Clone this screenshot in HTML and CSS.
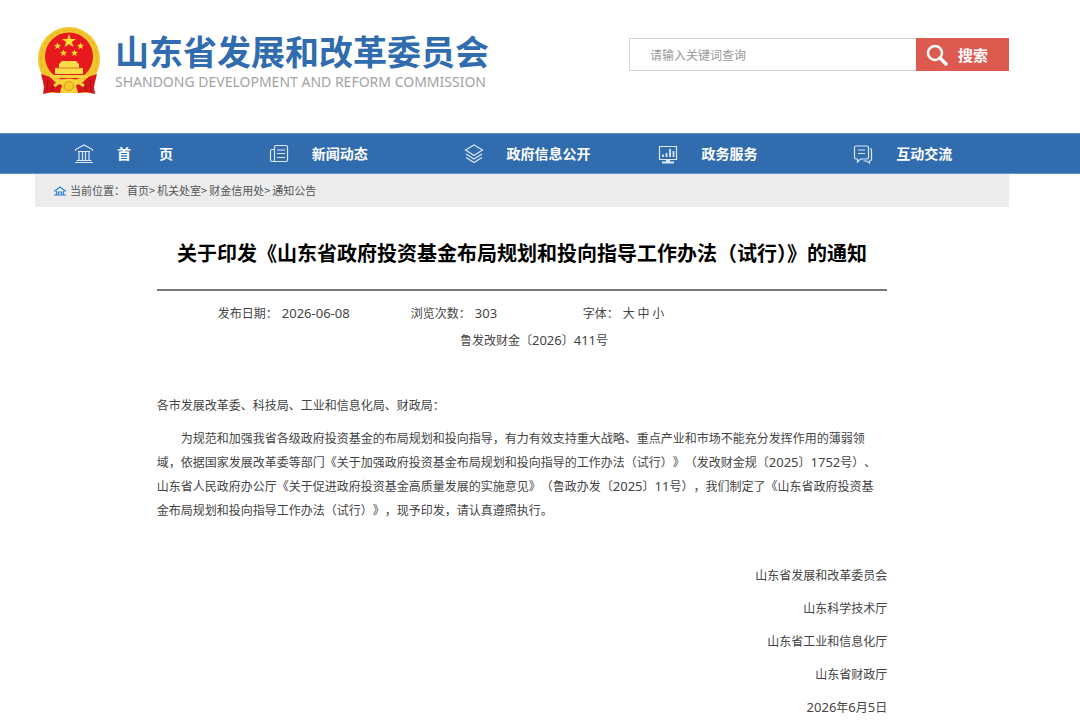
FILE: index.html
```html
<!DOCTYPE html>
<html lang="zh-CN">
<head>
<meta charset="utf-8">
<meta name="viewport" content="width=device-width, initial-scale=1">
<title>山东省发展和改革委员会</title>
<link rel="stylesheet" href="styles.css">
</head>
<body>
<header class="header wrap">
  <a class="brand" href="#">
    <svg class="emblem" viewBox="0 0 62 68" aria-hidden="true">
      <ellipse cx="31" cy="32" rx="31" ry="32" fill="#f3c62c"/>
      <ellipse cx="31" cy="32" rx="28" ry="29" fill="none" stroke="#e3ad25" stroke-width="1" stroke-dasharray="5 3"/>
      <circle cx="31" cy="29.500" r="24" fill="#e8191e"/>
      <path d="M9 49q22 10 44 0l4 3-3 14H8L5 52z" fill="#f3c62c"/>
      <path d="M3 47l9 3 5 5 7 3-2 8-8-1-9 2 1-7-1-5zM59 47l-9 3-5 5-7 3 2 8 8-1 9 2-1-7 1-5z" fill="#d9161c"/>
      <path d="M10 53l-1 11M15 57l-1 8M52 53l1 11M47 57l1 8" stroke="#a90f14" fill="none"/>
      <path d="M21 37l3-3h14l3 3v4h4v6H17v-6h4z" fill="#fbdc4a"/>
      <path d="M19 41h24" stroke="#dc7a18"/>
      <path d="M12 49.500h38M17 53q14 9 28 0M16 59q15-12 30 0M23 63q8 3 16 0" stroke="#f9d33c" stroke-width="3" fill="none"/>
      <circle cx="31" cy="59" r="4.500" fill="#f6c92d" stroke="#dd9620"/>
      <path d="M31 7l1.800 5H38l-4.100 3.100 1.500 5L31 17.200l-4.400 2.900 1.500-5L24 12h5.200z" fill="#ffdf32"/>
      <g fill="#ffdf32"><path id="star" d="M19.500 15.500l1 2.300 2.400.2-1.900 1.600.7 2.500-2.200-1.400-2.200 1.400.7-2.500-1.900-1.600 2.400-.2z"/><use href="#star" x="23"/><use href="#star" x="6" y="7"/><use href="#star" x="17" y="7"/></g>
    </svg>
    <span class="brand-text">
      <span class="brand-cn">山东省发展和改革委员会</span>
      <span class="brand-en">SHANDONG DEVELOPMENT AND REFORM COMMISSION</span>
    </span>
  </a>
  <form class="search">
    <input class="search-input" type="text" aria-label="关键词" placeholder="请输入关键词查询">
    <button class="search-button" type="button">
      <svg class="search-icon" viewBox="0 0 22 22" aria-hidden="true"><circle cx="9" cy="9" r="7" fill="none" stroke="#fff" stroke-width="2.500"/><path d="M14 14l6 6" stroke="#fff" stroke-width="3.500" stroke-linecap="round"/></svg>
      搜索
    </button>
  </form>
</header>
<nav class="nav">
  <div class="nav-list wrap">
    <a class="nav-link" href="#"><svg class="nav-icon" viewBox="0 0 20 20"><path d="M1.500 7V5.500L10 1l8.500 4.500V7M4 7.500h12M5 8v8M8.500 8v8M11.500 8v8M15 8v8M2.500 16.500h15M1 18.500h18"/></svg><span>首　　页</span></a>
    <a class="nav-link" href="#"><svg class="nav-icon" viewBox="0 0 20 20"><path d="M5.500 16V3q0-1.500 1.500-1.500h10q1.500 0 1.500 1.500v13q0 1.500-1.500 1.500H3q-1.500 0-1.500-1.500V7q0-1.500 1.500-1.500h2.500M5.500 16q0 1.500-1.500 1.500M8 6h8M8 9.500h8M8 13.500h8"/></svg><span>新闻动态</span></a>
    <a class="nav-link" href="#"><svg class="nav-icon" viewBox="0 0 20 20"><path d="M10 1l8.500 5-8.500 5.500L1.500 6zM2 10l8 5 8-5M2 13.500l8 5 8-5"/></svg><span>政府信息公开</span></a>
    <a class="nav-link" href="#"><svg class="nav-icon" viewBox="0 0 20 20"><path d="M1.500 2.500h17v13h-17z"/><path d="M5 13v-2.500M8.500 13V9M12 13V5M15.500 13V7" stroke-width="1.800"/><path d="M8 17h4M4 18.500h12" stroke-width="2"/></svg><span>政务服务</span></a>
    <a class="nav-link" href="#"><svg class="nav-icon" viewBox="0 0 20 20"><path d="M3 2h11q1.500 0 1.500 1.500v10q0 1.500-1.500 1.500H7.500L4.500 18v-3H3q-1.500 0-1.500-1.500v-10Q1.500 2 3 2zM5 6h7M5 9.500h7M17 4.500q1.500 0 1.500 1.500v9.500q0 1.500-2 1.500v2l-3-2h-3"/></svg><span>互动交流</span></a>
  </div>
</nav>
<main class="wrap">
  <div class="crumbs">
    <svg class="home-icon" viewBox="0 0 12 10" aria-hidden="true"><path d="M0 5.500L6 1l6 4.500M2.500 5v3.500M9.500 5v3.500M0 9h12M4.500 9V6h3v3" fill="none" stroke="#2b83d2" stroke-width="1.200"/></svg>
    <span class="crumbs-label">当前位置：</span>
    <span><a href="#">首页</a>&gt;</span><span><a href="#">机关处室</a>&gt;</span><span><a href="#">财金信用处</a>&gt;</span><a href="#">通知公告</a>
  </div>
  <article class="article">
    <h1 class="title">关于印发《山东省政府投资基金布局规划和投向指导工作办法（试行）》的通知</h1>
    <div class="meta">
      <span class="meta-item">发布日期：<span class="num">2026-06-08</span></span>
      <span class="meta-item">浏览次数：<span class="num">303</span></span>
      <span class="meta-item">字体：<span><a href="#">大</a> <a href="#">中</a> <a href="#">小</a></span></span>
    </div>
    <p class="docno">鲁发改财金〔<span class="num">2026</span>〕<span class="num">411</span>号</p>
    <div class="content">
      <p>各市发展改革委、科技局、工业和信息化局、财政局：</p>
      <p class="indent">为规范和加强我省各级政府投资基金的布局规划和投向指导，有力有效支持重大战略、重点产业和市场不能充分发挥作用的薄弱领<br>域，依据国家发展改革委等部门《关于加强政府投资基金布局规划和投向指导的工作办法（试行）》（发改财金规〔<span class="num">2025</span>〕<span class="num">1752</span>号）、<br>山东省人民政府办公厅《关于促进政府投资基金高质量发展的实施意见》（鲁政办发〔<span class="num">2025</span>〕<span class="num">11</span>号），我们制定了《山东省政府投资基<br>金布局规划和投向指导工作办法（试行）》，现予印发，请认真遵照执行。</p>
    </div>
    <div class="content sign">
      <p>山东省发展和改革委员会</p>
      <p>山东科学技术厅</p>
      <p>山东省工业和信息化厅</p>
      <p>山东省财政厅</p>
      <p><span class="num">2026</span>年<span class="num">6</span>月<span class="num">5</span>日</p>
    </div>
  </article>
</main>
</body>
</html>
```
FILE: styles.css
```css
* { box-sizing: border-box; }
body {
  margin: 0;
  background: #fff;
  color: #444;
  font: 12px/24px "Noto Sans CJK SC", sans-serif;
}
a { color: inherit; text-decoration: none; }
p { margin: 0; }
.wrap { margin: 0 71px 0 35px; }
.header {
  display: flex;
  justify-content: space-between;
  align-items: flex-start;
  padding-top: 27px;
  padding-bottom: 38px;
}
.brand { display: flex; gap: 15px; padding-left: 3px; }
.emblem { width: 62px; height: 68px; }
.brand-text { display: flex; flex-direction: column; padding-top: 6px; white-space: nowrap; }
.brand-cn {
  color: #306cae;
  font: 700 34px/40px "Liberation Sans", "Noto Sans CJK SC", sans-serif;
}
.brand-en { color: #a3a3a3; font: 14px/18px "Noto Sans", sans-serif; }
.search { display: flex; width: 380px; height: 33px; margin-top: 11px; }
.search-input {
  flex: 1;
  min-width: 0;
  border: 1px solid #d4d4d4;
  border-right: 0;
  border-radius: 0;
  padding: 0 20px;
  background: #fff;
  color: #555;
  font: inherit;
}
.search-input::placeholder { color: #999; opacity: 1; }
.search-button {
  display: flex;
  align-items: center;
  gap: 10px;
  width: 93px;
  border: 0;
  padding: 0 10px;
  background: #dc5a50;
  color: #fff;
  font: 700 15px/20px "Noto Sans CJK SC", sans-serif;
  white-space: nowrap;
}
.search-icon { width: 22px; height: 22px; flex: none; }
.nav {
  background: #306cae;
  border-top: 1px solid #6292c7;
  border-bottom: 1px solid #6292c7;
}
.nav-list { display: grid; grid-template-columns: repeat(5, 1fr); }
.nav-link {
  display: flex;
  align-items: center;
  gap: 23px;
  padding-left: 39px;
  color: #fff;
  font-size: 14px;
  font-weight: 700;
  line-height: 39px;
  white-space: nowrap;
}
.nav-icon { width: 20px; height: 20px; fill: none; stroke: #dce8f5; stroke-width: 1.2; }
.crumbs {
  display: flex;
  align-items: center;
  gap: 2px;
  padding-left: 19px;
  background: #ececec;
  color: #555;
  font-size: 11px;
  line-height: 33px;
}
.home-icon { width: 12px; height: 10px; }
.crumbs-label { padding-left: 2px; }
.article { width: 75%; margin: 0 auto; }
.title {
  margin: 0;
  padding: 30px 0 21px;
  border-bottom: 2px solid #777;
  color: #000;
  font-size: 20px;
  line-height: 31px;
  text-align: center;
  white-space: nowrap;
}
.meta {
  display: grid;
  grid-template-columns: 193px 172px 1fr;
  padding: 10px 0 0 61px;
}
.meta-item { display: flex; align-items: baseline; gap: 4px; }
.num { font: 13px/20px "Noto Sans", sans-serif; }
.docno { padding: 3px 0 0 24px; text-align: center; }
.content {
  display: grid;
  gap: 9px;
  padding-top: 41px;
  white-space: nowrap;
  text-spacing-trim: space-all;
}
.indent { text-indent: 24px; }
.sign { text-align: right; }
```
